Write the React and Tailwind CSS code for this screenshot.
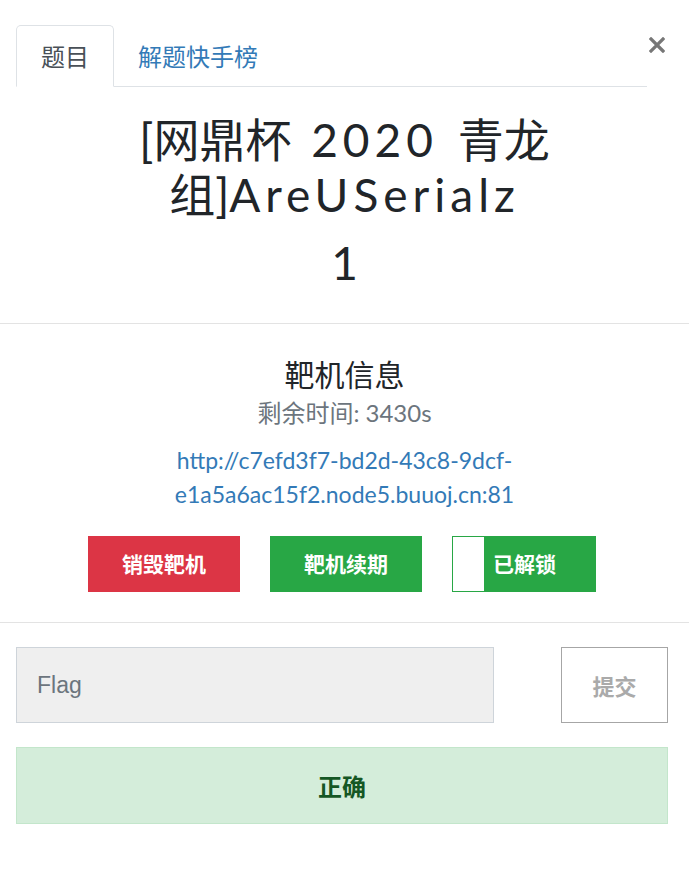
import React from 'react'

const cjk = '"Noto Sans CJK SC", sans-serif'
const lato = 'Lato, "Noto Sans CJK SC", sans-serif'

const App = () => {
  return (
    <div className="w-[689px] min-h-[878px] bg-white text-[#212529]" style={{ fontFamily: lato }}>
      {/* Tabs */}
      <div className="flex pt-[25px] pl-4">
        <div className="flex w-[631px] h-[62px] border-b border-[#dee2e6]" style={{ fontFamily: cjk }}>
          <div className="-mb-px h-[62px] px-6 flex items-center text-[24px] text-[#495057] bg-white border border-[#dee2e6] border-b-white rounded-t-[5px]">
            题目
          </div>
          <div className="h-[61px] px-6 flex items-center text-[24px] text-[#337ab7]">
            解题快手榜
          </div>
        </div>
        <button className="ml-[2px] mt-[12px] w-[16px] h-[16px]">
          <svg viewBox="0 0 16 16" width="16" height="16">
            <path d="M2 2 L14 14 M14 2 L2 14" stroke="#777" strokeWidth="3.2" strokeLinecap="square" />
          </svg>
        </button>
      </div>

      {/* Title */}
      <h3 className="mt-[25px] text-center text-[46px] leading-[55px] font-normal [word-spacing:8px]">
        [网鼎杯 <span className="tracking-[5px]">2020</span> 青龙<br />组]<span className="tracking-[5px]">AreUSerialz</span>
      </h3>
      <div className="mt-[13px] text-center text-[46px] leading-[55px]">1</div>

      <div className="mt-[33px] border-t border-[#e3e3e3]" />

      {/* Target info */}
      <div className="text-center">
        <div className="mt-[29px] text-[30px] leading-[40px]" style={{ fontFamily: cjk }}>靶机信息</div>
        <div className="mt-[3px] text-[24px] leading-[34px] text-[#6c757d]">剩余时间: 3430s</div>
        <div className="mt-[13px] text-[23px] leading-[34px] text-[#337ab7]">
          http://c7efd3f7-bd2d-43c8-9dcf-<br />e1a5a6ac15f2.node5.buuoj.cn:81
        </div>
      </div>

      <div className="mt-[25px] flex justify-center pr-[5px] gap-[30px]" style={{ fontFamily: cjk }}>
        <button className="w-[152px] h-[56px] bg-[#dc3545] text-white text-[21px] font-bold">销毁靶机</button>
        <button className="w-[152px] h-[56px] bg-[#28a745] text-white text-[21px] font-bold">靶机续期</button>
        <div className="w-[144px] h-[56px] flex border border-[#28a745] bg-[#28a745]">
          <div className="w-[31px] h-full bg-white" />
          <span className="ml-[9px] flex items-center text-white text-[21px] font-bold">已解锁</span>
        </div>
      </div>

      <div className="mt-[30px] border-t border-[#e3e3e3]" />

      {/* Flag form */}
      <div className="pl-4 pr-[21px]">
        <div className="mt-[24px] flex justify-between">
          <div className="w-[478px] h-[76px] bg-[#efefef] border border-[#ced4da] flex items-center pl-[20px] text-[23px] text-[#6c757d]" style={{ fontFamily: '"Liberation Sans", Arial, sans-serif' }}>
            Flag
          </div>
          <button className="w-[107px] h-[76px] border border-[#a6a6a6] bg-white text-[22px] font-bold text-[#aaaaaa]" style={{ fontFamily: cjk }}>
            提交
          </button>
        </div>
        <div className="mt-[24px] h-[77px] bg-[#d4edda] border border-[#c3e6cb] flex items-center justify-center text-[24px] font-bold text-[#155724]" style={{ fontFamily: cjk }}>
          正确
        </div>
      </div>
    </div>
  )
}

export default App
